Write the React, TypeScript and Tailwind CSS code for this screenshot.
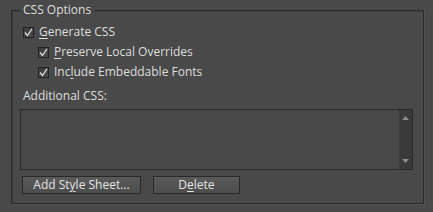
import React from "react";

function Check({ label }: { label: React.ReactNode }) {
  return (
    <div className="flex h-[20px] items-center gap-[5px]">
      <span className="flex h-[11px] w-[11px] shrink-0 items-center justify-center border border-[#222222] bg-gradient-to-b from-[#3e3e3e] to-[#4a4a4a]">
        <svg width="9" height="9" viewBox="0 0 9 9" fill="none">
          <path d="M1 4.5 L3.5 7.5 L8 0.8" stroke="#dcdcdc" strokeWidth="1.3" />
        </svg>
      </span>
      <span>{label}</span>
    </div>
  );
}

function Btn({ children, w }: { children: React.ReactNode; w: string }) {
  return (
    <button
      className={`h-[18px] ${w} border border-[#292929] bg-gradient-to-b from-[#5a5a5a] to-[#4d4d4d] text-center leading-[16px] text-[#e4e4e4]`}
    >
      {children}
    </button>
  );
}

export default function App() {
  return (
    <div
      className="h-[212px] w-[433px] overflow-hidden bg-[#494949] pt-[3px] text-[12px] text-[#dedede]"
      style={{ fontFamily: '"Open Sans", "Noto Sans", sans-serif' }}
    >
      <fieldset className="ml-[11px] w-[413px] border border-[#2a2a2a] pb-[9px] shadow-[inset_1px_1px_0_#404040,1px_1px_0_#525252]">
        <legend className="ml-[7px] px-[4px] leading-[14px]">CSS Options</legend>
        <div className="ml-[11px] mt-[5px]">
          <Check
            label={
              <>
                <u className="underline-offset-2">G</u>enerate CSS
              </>
            }
          />
          <div className="ml-[15px]">
            <Check
              label={
                <>
                  <u className="underline-offset-2">P</u>reserve Local Overrides
                </>
              }
            />
            <Check
              label={
                <>
                  Inc<u className="underline-offset-2">l</u>ude Embeddable Fonts
                </>
              }
            />
          </div>
          <div className="mt-[4px] flex h-[20px] items-center">Additional CSS:</div>
        </div>
        <div className="ml-[8px] mt-[3px] flex h-[61px] w-[393px] border border-[#2a2a2a] bg-[#484848]">
          <div className="flex-1" />
          <div className="flex w-[13px] flex-col items-center justify-between bg-[#3a3a3a] py-[6px]">
            <svg width="7" height="4" viewBox="0 0 7 4">
              <path d="M0 4 L3.5 0 L7 4 Z" fill="#8c8c8c" />
            </svg>
            <svg width="7" height="4" viewBox="0 0 7 4">
              <path d="M0 0 L3.5 4 L7 0 Z" fill="#8c8c8c" />
            </svg>
          </div>
        </div>
        <div className="ml-[10px] mt-[6px] flex gap-[12px]">
          <Btn w="w-[119px]">
            Add St<u className="underline-offset-2">y</u>le Sheet...
          </Btn>
          <Btn w="w-[87px]">
            D<u className="underline-offset-2">e</u>lete
          </Btn>
        </div>
      </fieldset>
    </div>
  );
}
